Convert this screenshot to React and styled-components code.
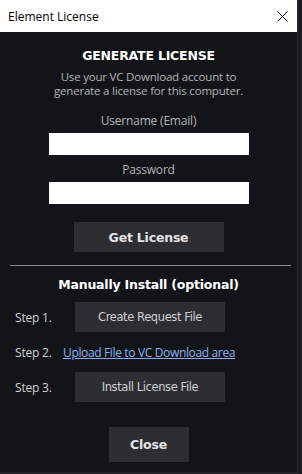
import React from "react";
import styled, { createGlobalStyle } from "styled-components";

const Global = createGlobalStyle`
  html, body { margin: 0; padding: 0; background: #17181a; }
  body { width: 302px; height: 474px; overflow: hidden; font-family: "DejaVu Sans", "Noto Sans", sans-serif; }
`;

const Screen = styled.div`
  display: flex;
  width: 302px;
  height: 474px;
`;

const Window = styled.div`
  width: 297px;
  display: flex;
  flex-direction: column;
  background: #131417;
`;

const Outside = styled.div`
  flex: 1;
  background: #1b1c1f;
  border-left: 1px solid #2a2b2e;
`;

const TitleBar = styled.div`
  height: 32px;
  background: #ffffff;
  display: flex;
  align-items: center;
  justify-content: space-between;
  padding-left: 8px;
  padding-right: 8px;
  font-family: "Open Sans", "Noto Sans", sans-serif;
  font-size: 12px;
  color: #000;
`;

const CloseIcon = styled.svg`
  width: 11px;
  height: 11px;
  margin-right: 1px;
`;

const Body = styled.div`
  flex: 1;
  display: flex;
  flex-direction: column;
  align-items: center;
  padding-top: 16px;
`;

const Heading = styled.div`
  font-family: "DejaVu Sans", sans-serif;
  font-weight: bold;
  font-size: 12.5px;
  color: #ffffff;
  letter-spacing: -0.2px;
  line-height: 16px;
`;

const Desc = styled.div`
  margin-top: 6px;
  text-align: center;
  font-family: "Open Sans", sans-serif;
  font-size: 11.5px;
  line-height: 14px;
  color: #b3b4b6;
  letter-spacing: -0.2px;
`;

const Label = styled.div`
  margin-top: ${(p) => p.$mt}px;
  font-family: "Open Sans", sans-serif;
  font-size: 12px;
  line-height: 14px;
  color: #b3b4b6;
  letter-spacing: -0.2px;
`;

const Input = styled.div`
  margin-top: 5px;
  width: 200px;
  height: 22px;
  background: #ffffff;
`;

const Button = styled.div`
  width: ${(p) => p.$w}px;
  height: ${(p) => p.$h}px;
  background: #2d2e32;
  display: flex;
  align-items: center;
  justify-content: center;
  font-family: "DejaVu Sans", sans-serif;
  font-weight: ${(p) => (p.$bold ? "bold" : "normal")};
  font-size: ${(p) => (p.$bold ? 12.5 : 11.5)}px;
  letter-spacing: ${(p) => (p.$bold ? "-0.2px" : "-0.4px")};
  color: ${(p) => (p.$bold ? "#e4e4e4" : "#cfcfd0")};
`;

const PrimaryWrap = styled.div`
  margin-top: 18px;
`;

const Separator = styled.div`
  margin-top: 13px;
  width: 281px;
  height: 1px;
  background: #8a8b8d;
  align-self: flex-start;
  margin-left: 10px;
`;

const SubHeading = styled(Heading)`
  margin-top: 11px;
  font-size: 12.5px;
`;

const Steps = styled.div`
  margin-top: 9px;
  align-self: stretch;
  display: flex;
  flex-direction: column;
`;

const StepRow = styled.div`
  display: flex;
  align-items: center;
  height: ${(p) => p.$h}px;
  padding-left: 15px;
`;

const StepLabel = styled.div`
  width: 48px;
  font-family: "Open Sans", sans-serif;
  font-size: 12px;
  color: #d2d3d5;
  letter-spacing: -0.2px;
  flex-shrink: 0;
  margin-right: ${(p) => p.$mr || 0}px;
`;

const Link = styled.a`
  font-family: "Open Sans", sans-serif;
  font-size: 12px;
  color: #8cb0f5;
  text-decoration: underline;
  letter-spacing: -0.35px;
`;

const CloseWrap = styled.div`
  margin-top: 25px;
`;

const BottomLine = styled.div`
  margin-top: auto;
  align-self: stretch;
  height: 2px;
  background: #232427;
`;

export default function App() {
  return (
    <>
      <Global />
      <Screen>
        <Window>
          <TitleBar>
            <span>Element License</span>
            <CloseIcon viewBox="0 0 11 11">
              <path d="M0.5 0.5 L10.5 10.5 M10.5 0.5 L0.5 10.5" stroke="#000" strokeWidth="1" fill="none" />
            </CloseIcon>
          </TitleBar>
          <Body>
            <Heading>GENERATE LICENSE</Heading>
            <Desc>
              Use your VC Download account to
              <br />
              generate a license for this computer.
            </Desc>
            <Label $mt={16}>Username (Email)</Label>
            <Input />
            <Label $mt={8}>Password</Label>
            <Input />
            <PrimaryWrap>
              <Button $w={150} $h={30} $bold>Get License</Button>
            </PrimaryWrap>
            <Separator />
            <SubHeading>Manually Install (optional)</SubHeading>
            <Steps>
              <StepRow $h={30}>
                <StepLabel $mr={12}>Step 1.</StepLabel>
                <Button $w={150} $h={30}>Create Request File</Button>
              </StepRow>
              <StepRow $h={40}>
                <StepLabel>Step 2.</StepLabel>
                <Link href="#">Upload File to VC Download area</Link>
              </StepRow>
              <StepRow $h={30}>
                <StepLabel $mr={12}>Step 3.</StepLabel>
                <Button $w={150} $h={30}>Install License File</Button>
              </StepRow>
            </Steps>
            <CloseWrap>
              <Button $w={80} $h={35} $bold>Close</Button>
            </CloseWrap>
            <BottomLine />
          </Body>
        </Window>
        <Outside />
      </Screen>
    </>
  );
}
